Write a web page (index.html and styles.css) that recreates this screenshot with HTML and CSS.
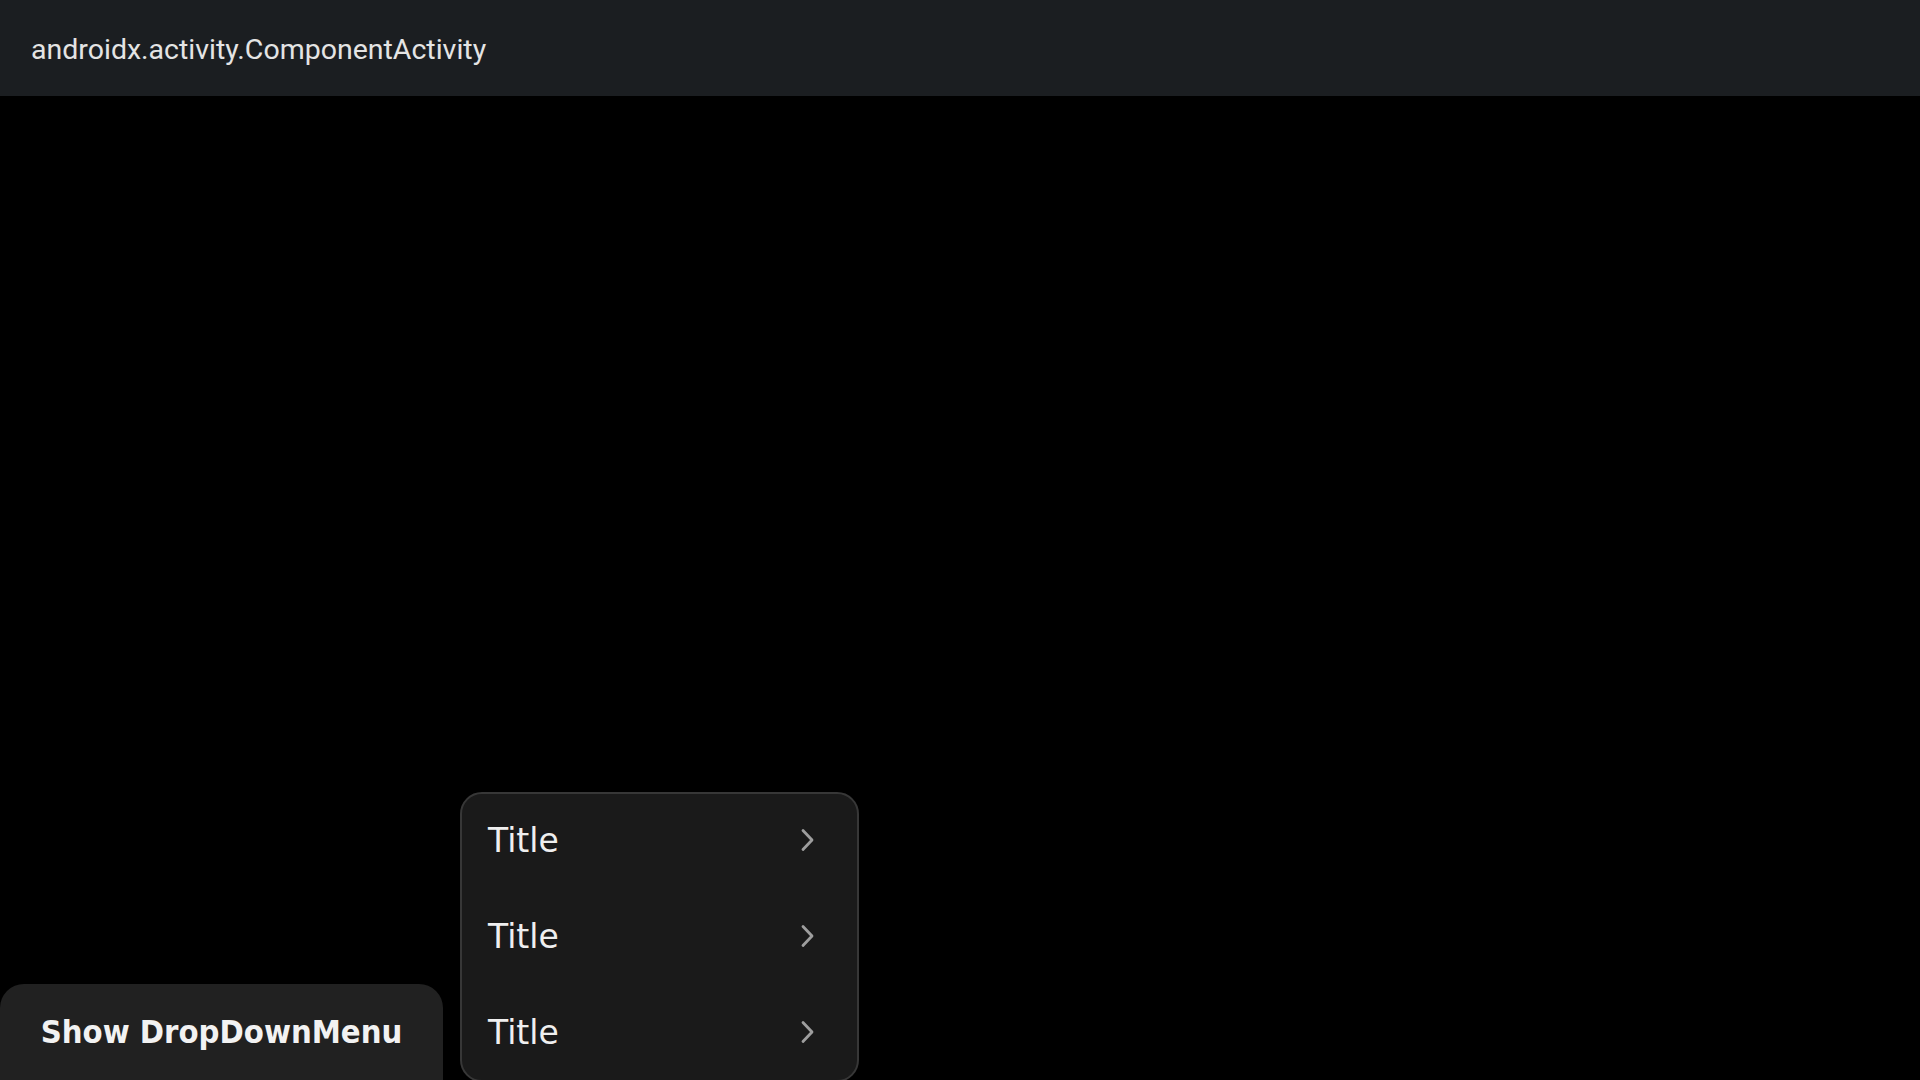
FILE: index.html
```html
<!DOCTYPE html>
<html>
<head>
<meta charset="utf-8">
<link rel="stylesheet" href="styles.css">
</head>
<body>
<div class="app">
  <header class="topbar"><span class="title">androidx.activity.ComponentActivity</span></header>
  <main class="content">
    <button class="show-btn">Show DropDownMenu</button>
    <div class="menu">
      <div class="item"><span class="label">Title</span><svg class="chev" viewBox="0 0 24 24" width="24" height="24"><path d="M8 2.5 L17 12 L8 21.5" fill="none" stroke="#9e9e9e" stroke-width="2.8" stroke-linecap="round" stroke-linejoin="round"/></svg></div>
      <div class="item"><span class="label">Title</span><svg class="chev" viewBox="0 0 24 24" width="24" height="24"><path d="M8 2.5 L17 12 L8 21.5" fill="none" stroke="#9e9e9e" stroke-width="2.8" stroke-linecap="round" stroke-linejoin="round"/></svg></div>
      <div class="item"><span class="label">Title</span><svg class="chev" viewBox="0 0 24 24" width="24" height="24"><path d="M8 2.5 L17 12 L8 21.5" fill="none" stroke="#9e9e9e" stroke-width="2.8" stroke-linecap="round" stroke-linejoin="round"/></svg></div>
    </div>
  </main>
</div>
</body>
</html>
```
FILE: styles.css
```css
html, body {
  margin: 0;
  padding: 0;
  background: #000;
}
.app {
  width: 1920px;
  height: 1080px;
  overflow: hidden;
  display: flex;
  flex-direction: column;
}
.topbar {
  height: 96px;
  box-sizing: border-box;
  flex: none;
  background: #1b1e21;
  display: flex;
  align-items: center;
  padding: 2px 0 0 31px;
}
.title {
  font-family: Roboto, "Liberation Sans", sans-serif;
  font-size: 28.5px;
  color: #e4e4e4;
}
.content {
  flex: 1;
  display: flex;
  align-items: flex-end;
  gap: 17px;
  background: #000;
}
.show-btn {
  width: 443px;
  height: 96px;
  border: none;
  background: #212121;
  border-radius: 24px 24px 0 0;
  color: #f2f2f2;
  font-family: "DejaVu Sans Condensed", "DejaVu Sans", sans-serif;
  font-stretch: condensed;
  font-weight: 700;
  font-size: 32.5px;
  padding: 0;
  text-align: center;
}
.menu {
  width: 399px;
  box-sizing: border-box;
  border: 2px solid #373737;
  border-radius: 22px;
  background: #1a1a1a;
  margin-bottom: -2px;
  display: flex;
  flex-direction: column;
}
.item {
  height: 96px;
  display: flex;
  align-items: center;
  justify-content: space-between;
  padding: 0 38px 0 26px;
}
.item:first-child {
  margin-top: -2px;
}
.label {
  font-family: "DejaVu Sans", sans-serif;
  font-size: 33px;
  color: #efefef;
}
.chev {
  display: block;
}
```
